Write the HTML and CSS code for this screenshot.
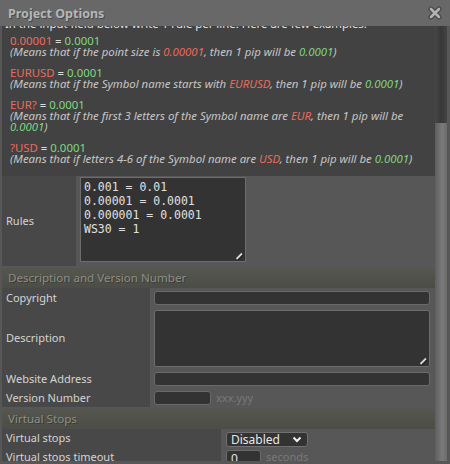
FILE: index.html
```html
<!DOCTYPE html>
<html>
  <head>
    <title>Project Options</title>
    <link rel="stylesheet" href="styles.css">
  </head>
  <body>
    <div class="dialog">
      <div class="titlebar">
        <span class="title">Project Options</span>
        <svg class="close" width="14" height="14" viewBox="0 0 14 14">
          <path d="M3 3 L11 11 M11 3 L3 11" stroke="#454545" stroke-width="5" stroke-linecap="round"/>
          <path d="M3 3 L11 11 M11 3 L3 11" stroke="#b2b2b2" stroke-width="2.6" stroke-linecap="round"/>
        </svg>
      </div>

      <div class="frame">
        <div class="content">
          <div class="help">
            <div class="help-inner">
              <p class="intro">In the input field below write 1 rule per line. Here are few examples.</p>
              <div class="rule">
                <div><span class="red">0.00001</span> = <span class="green">0.0001</span></div>
                <div class="note">(Means that if the point size is <span class="red">0.00001</span>, then 1 pip will be <span class="green">0.0001</span>)</div>
              </div>
              <div class="rule">
                <div><span class="red">EURUSD</span> = <span class="green">0.0001</span></div>
                <div class="note">(Means that if the Symbol name starts with <span class="red">EURUSD</span>, then 1 pip will be <span class="green">0.0001</span>)</div>
              </div>
              <div class="rule">
                <div><span class="red">EUR?</span> = <span class="green">0.0001</span></div>
                <div class="note">(Means that if the first 3 letters of the Symbol name are <span class="red">EUR</span>, then 1 pip will be <span class="green">0.0001</span>)</div>
              </div>
              <div class="rule">
                <div><span class="red">?USD</span> = <span class="green">0.0001</span></div>
                <div class="note">(Means that if letters 4-6 of the Symbol name are <span class="red">USD</span>, then 1 pip will be <span class="green">0.0001</span>)</div>
              </div>
            </div>
          </div>

          <div class="row rules-row">
            <div class="label label-middle">Rules</div>
            <div class="field">
              <span class="area-wrap">
                <textarea class="code" spellcheck="false">0.001 = 0.01
0.00001 = 0.0001
0.000001 = 0.0001
WS30 = 1</textarea>
                <svg class="grip" width="9" height="9" viewBox="0 0 9 9">
                  <path d="M2 8 L8 2" stroke="#1e1e1e" stroke-width="2.4"/>
                  <path d="M1.5 7 L7 1.5" stroke="#d8d8d8" stroke-width="1.8"/>
                </svg>
              </span>
            </div>
          </div>

          <div class="section">
            <div class="section-head">Description and Version Number</div>
            <div class="row desc-row">
              <div class="label">Copyright</div>
              <div class="field"><input class="text wide" type="text"></div>
            </div>
            <div class="row desc-row">
              <div class="label label-middle">Description</div>
              <div class="field">
                <span class="area-wrap wide">
                  <textarea class="plain"></textarea>
                  <svg class="grip" width="9" height="9" viewBox="0 0 9 9">
                    <path d="M2 8 L8 2" stroke="#1e1e1e" stroke-width="2.4"/>
                    <path d="M1.5 7 L7 1.5" stroke="#d8d8d8" stroke-width="1.8"/>
                  </svg>
                </span>
              </div>
            </div>
            <div class="row desc-row">
              <div class="label">Website Address</div>
              <div class="field"><input class="text wide" type="text"></div>
            </div>
            <div class="row desc-row">
              <div class="label">Version Number</div>
              <div class="field"><input class="text version" type="text"><span class="hint">xxx.yyy</span></div>
            </div>
          </div>

          <div class="section">
            <div class="section-head">Virtual Stops</div>
            <div class="row stops-row">
              <div class="label">Virtual stops</div>
              <div class="field">
                <span class="select-wrap">
                  <select class="select">
                    <option>Disabled</option>
                    <option>Enabled</option>
                  </select>
                  <svg class="chevron" width="10" height="7" viewBox="0 0 10 7">
                    <path d="M1.5 1.5 L5 5 L8.5 1.5" fill="none" stroke="#f0f0f0" stroke-width="2"/>
                  </svg>
                </span>
              </div>
            </div>
            <div class="row stops-row">
              <div class="label">Virtual stops timeout</div>
              <div class="field"><input class="text seconds" type="text" value="0"><span class="hint">seconds</span></div>
            </div>
          </div>
        </div>

        <div class="scrollbar">
          <div class="thumb"></div>
        </div>
      </div>
    </div>
  </body>
</html>
```

FILE: styles.css
```css
html, body {
  margin: 0;
  padding: 0;
  height: 464px;
  overflow: hidden;
  background-color: #575757;
  font-family: "Noto Sans", "Open Sans", sans-serif;
  font-size: 11px;
  color: #d6d6d6;
}

.dialog {
  display: flex;
  flex-direction: column;
  height: 464px;
}

.titlebar {
  display: flex;
  align-items: center;
  justify-content: space-between;
  height: 26px;
  padding: 0 8px 0 8px;
  background-color: #686868;
  flex-shrink: 0;
}

.title {
  font-size: 12.5px;
  font-weight: bold;
  color: #b6b6b6;
  text-shadow: 1px 1px #4a4a4a;
}

.frame {
  display: flex;
  flex: 1;
  min-height: 0;
  padding: 0 3px 3px 2px;
}

.content {
  flex: 1;
  min-width: 0;
  overflow: hidden;
}

/* help text, scrolled so the first line is cut */
.help {
  background-color: #424242;
  overflow: hidden;
  padding: 0 6px 12px 0;
}

.help-inner {
  margin-top: -8px;
  font-size: 11.4px;
  line-height: 11px;
}

.help p {
  margin: 0 0 6px 0;
}

.intro {
  padding-left: 3px;
  color: #e2e2e2;
}

.rule {
  padding-left: 8px;
  margin-bottom: 10px;
  color: #dcdcdc;
}

.rule:last-child {
  margin-bottom: 0;
}

.note {
  font-style: italic;
  color: #c6c6c6;
}

.red {
  color: #ee6a5c;
}

.green {
  color: #80d880;
}

/* rows */
.row {
  display: grid;
}

.rules-row {
  grid-template-columns: 74px 1fr;
}

.desc-row {
  grid-template-columns: 148px 1fr;
}

.stops-row {
  grid-template-columns: 219px 1fr;
}

.label {
  background-color: #484848;
  padding: 3px 4px 0 4px;
  line-height: 14px;
  color: #d4d4d4;
}

.label-middle {
  display: flex;
  align-items: center;
  padding-top: 0;
}

.field {
  display: flex;
  align-items: flex-start;
  padding: 3px 5px 2px 4px;
}

.rules-row .field {
  padding: 1px 0 4px 4px;
}

.area-wrap {
  position: relative;
  display: block;
}

.area-wrap.wide {
  flex: 1;
}

textarea {
  display: block;
  box-sizing: border-box;
  margin: 0;
  resize: none;
  outline: none;
  background-color: #333333;
  border: 1px solid #6d6d6d;
  color: #e0e0e0;
}

.code {
  width: 166px;
  height: 85px;
  padding: 2px 3px;
  font-family: "DejaVu Sans Mono", monospace;
  font-size: 11.5px;
  line-height: 14px;
  overflow: hidden;
}

.plain {
  width: 100%;
  height: 57px;
  border-radius: 2px;
}

.grip {
  position: absolute;
  right: 2px;
  bottom: 1px;
}

.text {
  box-sizing: border-box;
  height: 14px;
  margin: 0;
  padding: 0 3px;
  background-color: #333333;
  border: 1px solid #6a6a6a;
  border-radius: 3px;
  outline: none;
  color: #e4e4e4;
  font-family: "Noto Sans", sans-serif;
  font-size: 11px;
}

.wide {
  flex: 1;
}

.version {
  width: 57px;
}

.seconds {
  width: 35px;
  height: 16px;
  padding: 0 4px;
  font-size: 12px;
}

.hint {
  padding-left: 5px;
  line-height: 14px;
  color: #777777;
}

.section {
  margin-top: 2px;
}

.section-head {
  height: 20px;
  line-height: 20px;
  padding-left: 6px;
  border-radius: 4px 4px 0 0;
  background: linear-gradient(#55564e, #4c4d46);
  font-size: 11.6px;
  color: #8d8e86;
  text-shadow: 1px 1px #3c3c38;
}

.stops-row .label {
  padding-top: 2px;
}

.stops-row .field {
  padding: 3px 5px 1px 5px;
}

.stops-row + .stops-row .field {
  padding-top: 2px;
}

.select-wrap {
  position: relative;
  display: block;
}

.select {
  appearance: none;
  box-sizing: border-box;
  width: 82px;
  height: 15px;
  margin: 0;
  padding: 0 4px;
  background-color: #333333;
  border: 1px solid #707070;
  border-radius: 3px;
  outline: none;
  color: #e8e8e8;
  font-family: "Noto Sans", sans-serif;
  font-size: 12px;
  line-height: 13px;
}

.chevron {
  position: absolute;
  right: 6px;
  top: 4px;
}

/* scrollbar */
.scrollbar {
  display: flex;
  flex-direction: column;
  width: 12px;
  background: linear-gradient(to right, #474747, #383838 50%, #444444);
}

.thumb {
  flex: 1;
  margin-top: 97px;
  background: linear-gradient(to right, #5e5e5e, #7a7a7a 60%, #6c6c6c);
}
```
